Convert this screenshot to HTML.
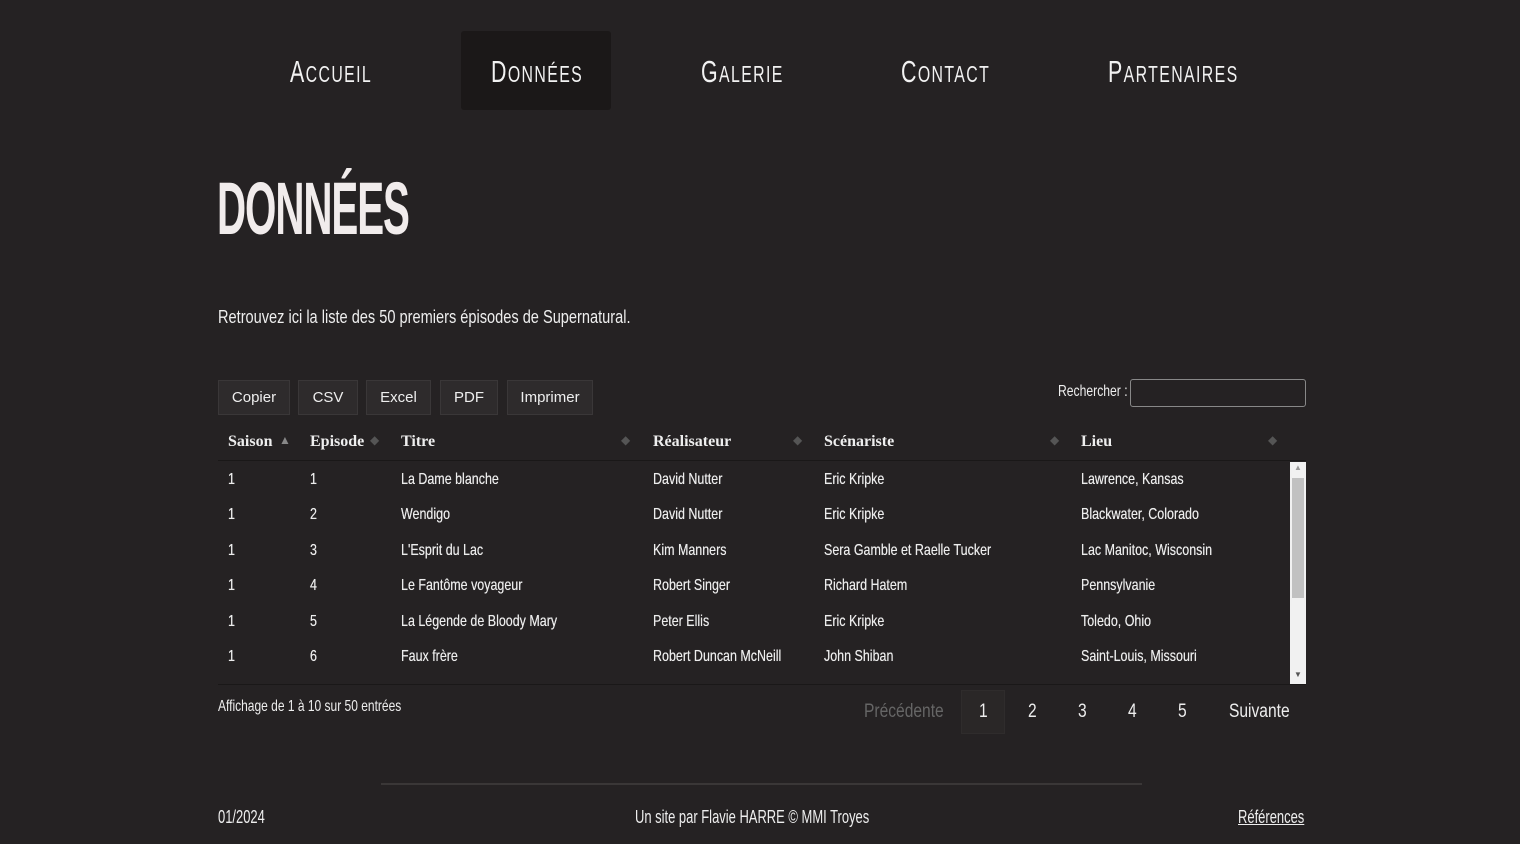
<!DOCTYPE html>
<html><head><meta charset="utf-8"><style>
body{margin:0;width:1520px;height:844px;background:#252223;color:#eee;font-family:"Liberation Sans",sans-serif;position:relative;overflow:hidden}
.a{position:absolute;white-space:nowrap;transform-origin:left top}
.nav{font-size:31px;letter-spacing:2px;color:#f2f2f2;top:54px;transform:scaleX(.69)}
.nav small{font-size:23px}
.btn{position:absolute;top:380px;height:35px;background:#2e2b2c;border:1px solid #3a3738;box-sizing:border-box;font-family:"Liberation Sans",sans-serif;font-size:15px;color:#eee;text-align:center;line-height:34px}
.th{top:433px;font-family:"Liberation Serif",serif;font-weight:bold;font-size:16px;color:#eee}
.td{font-size:16px;color:#ececec;transform:scaleX(.78);text-shadow:0 0 .4px #eee}
.dia{position:absolute;top:433px;width:8px;height:16px;color:#555;font-size:12px}
.pg{top:701px;font-size:19px;color:#eee;transform:scaleX(.82)}
.f{font-size:18px;top:807px;transform:scaleX(.72)}
</style></head><body>
<div class="a" style="left:461px;top:31px;width:150px;height:79px;background:#1b1818;border-radius:3px"></div>
<div class="a nav" style="left:290px">A<small>CCUEIL</small></div>
<div class="a nav" style="left:491px">D<small>ONNÉES</small></div>
<div class="a nav" style="left:701px">G<small>ALERIE</small></div>
<div class="a nav" style="left:901px">C<small>ONTACT</small></div>
<div class="a nav" style="left:1108px">P<small>ARTENAIRES</small></div>
<div class="a" style="left:217px;top:166px;font-size:74px;font-weight:bold;color:#f1ecec;letter-spacing:-2px;transform:scaleX(.545)">DONNÉES</div>
<div class="a" style="left:218px;top:307px;font-size:18px;transform:scaleX(.81)">Retrouvez ici la liste des 50 premiers épisodes de Supernatural.</div>
<div class="btn" style="left:218px;width:72px">Copier</div>
<div class="btn" style="left:298px;width:60px">CSV</div>
<div class="btn" style="left:366px;width:65px">Excel</div>
<div class="btn" style="left:440px;width:58px">PDF</div>
<div class="btn" style="left:507px;width:86px">Imprimer</div>
<div class="a" style="left:1058px;top:383px;font-size:16px;transform:scaleX(.76)">Rechercher :</div>
<div class="a" style="left:1130px;top:379px;width:176px;height:28px;border:1px solid #888;border-radius:3px;box-sizing:border-box"></div>
<div class="a th" style="left:228px">Saison</div>
<div class="a th" style="left:310px">Episode</div>
<div class="a th" style="left:401px">Titre</div>
<div class="a th" style="left:653px">Réalisateur</div>
<div class="a th" style="left:824px">Scénariste</div>
<div class="a th" style="left:1081px">Lieu</div>
<div class="dia" style="left:279px;color:#888">▲</div>
<div class="dia" style="left:370px">◆</div>
<div class="dia" style="left:621px">◆</div>
<div class="dia" style="left:793px">◆</div>
<div class="dia" style="left:1050px">◆</div>
<div class="dia" style="left:1268px">◆</div>
<div class="a" style="left:218px;top:460px;width:1088px;height:1px;background:#1a1818"></div>
<div class="a" style="left:218px;top:684px;width:1088px;height:1px;background:#1a1818"></div>
<div class="a" style="left:1290px;top:462px;width:16px;height:222px;background:#f1f1f1"></div>
<div class="a" style="left:1292px;top:478px;width:12px;height:120px;background:#c1c1c1"></div>
<div class="a" style="left:1294px;top:463px;font-size:8px;color:#999">▲</div>
<div class="a" style="left:1294px;top:670px;font-size:8px;color:#555">▼</div>
<div id="rows"></div>
<script>
var d=[["1","1","La Dame blanche","David Nutter","Eric Kripke","Lawrence, Kansas"],["1","2","Wendigo","David Nutter","Eric Kripke","Blackwater, Colorado"],["1","3","L'Esprit du Lac","Kim Manners","Sera Gamble et Raelle Tucker","Lac Manitoc, Wisconsin"],["1","4","Le Fantôme voyageur","Robert Singer","Richard Hatem","Pennsylvanie"],["1","5","La Légende de Bloody Mary","Peter Ellis","Eric Kripke","Toledo, Ohio"],["1","6","Faux frère","Robert Duncan McNeill","John Shiban","Saint-Louis, Missouri"]];
var x=[228,310,401,653,824,1081],h="";
d.forEach(function(r,i){r.forEach(function(c,j){h+='<div class="a td" style="left:'+x[j]+'px;top:'+(471+i*35.4)+'px">'+c+'</div>'})});
document.getElementById('rows').outerHTML=h;
</script>
<div class="a" style="left:218px;top:698px;font-size:16px;transform:scaleX(.75)">Affichage de 1 à 10 sur 50 entrées</div>
<div class="a pg" style="left:864px;color:#666">Précédente</div>
<div class="a" style="left:961px;top:690px;width:44px;height:44px;background:#2a2727;border:1px solid #2f2c2c;box-sizing:border-box"></div>
<div class="a pg" style="left:979px">1</div>
<div class="a pg" style="left:1028px">2</div>
<div class="a pg" style="left:1078px">3</div>
<div class="a pg" style="left:1128px">4</div>
<div class="a pg" style="left:1178px">5</div>
<div class="a pg" style="left:1229px">Suivante</div>
<div class="a" style="left:381px;top:783px;width:761px;height:2px;background:#3a3737"></div>
<div class="a f" style="left:218px">01/2024</div>
<div class="a f" style="left:635px">Un site par Flavie HARRE © MMI Troyes</div>
<div class="a f" style="left:1238px;text-decoration:underline">Références</div>
</body></html>
